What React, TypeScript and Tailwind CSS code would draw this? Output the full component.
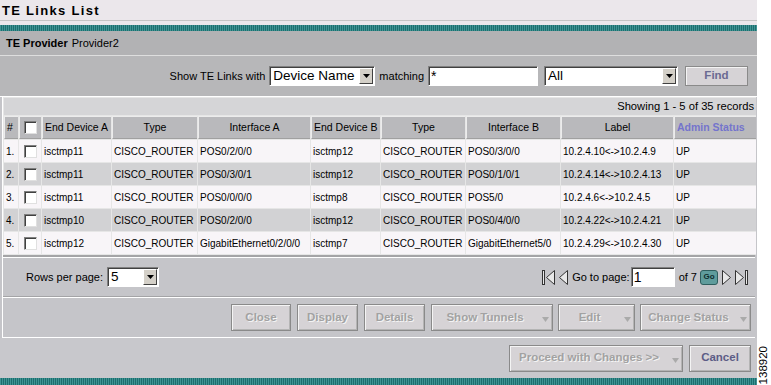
import React from "react";

const rows: string[][] = [
  ["1.", "isctmp11", "CISCO_ROUTER", "POS0/2/0/0", "isctmp12", "CISCO_ROUTER", "POS0/3/0/0", "10.2.4.10<->10.2.4.9", "UP"],
  ["2.", "isctmp11", "CISCO_ROUTER", "POS0/3/0/1", "isctmp12", "CISCO_ROUTER", "POS0/1/0/1", "10.2.4.14<->10.2.4.13", "UP"],
  ["3.", "isctmp11", "CISCO_ROUTER", "POS0/0/0/0", "isctmp8", "CISCO_ROUTER", "POS5/0", "10.2.4.6<->10.2.4.5", "UP"],
  ["4.", "isctmp10", "CISCO_ROUTER", "POS0/2/0/0", "isctmp12", "CISCO_ROUTER", "POS0/4/0/0", "10.2.4.22<->10.2.4.21", "UP"],
  ["5.", "isctmp12", "CISCO_ROUTER", "GigabitEthernet0/2/0/0", "isctmp7", "CISCO_ROUTER", "GigabitEthernet5/0", "10.2.4.29<->10.2.4.30", "UP"],
];

function Checkbox() {
  return (
    <div className="w-[13px] h-[13px] bg-white border-t border-l border-t-[#808080] border-l-[#808080] border-b border-r border-b-[#e0e0e0] border-r-[#e0e0e0] shadow-[inset_1px_1px_0_#404040]" />
  );
}

function Arrow() {
  return (
    <div className="w-[14px] h-[16px] shrink-0 bg-[#d4d0c8] border-t border-l border-t-white border-l-white border-b border-r border-b-[#404040] border-r-[#404040] flex items-center justify-center">
      <svg width="7" height="4" viewBox="0 0 7 4">
        <path d="M0 0 L7 0 L3.5 4 Z" fill="#000" />
      </svg>
    </div>
  );
}

function Select({ value, w }: { value: string; w: string }) {
  return (
    <div className={`${w} h-[20px] bg-white flex items-center justify-between border-t border-l border-t-[#808080] border-l-[#808080] border-b border-r border-b-white border-r-white shadow-[inset_1px_1px_0_#404040] pl-[3px] pr-[1px]`}>
      <span className="text-[13.5px] leading-none text-black whitespace-nowrap">{value}</span>
      <Arrow />
    </div>
  );
}

function Btn({ label, w, dd, enabled, cls }: { label: string; w: string; dd?: boolean; enabled?: boolean; cls?: string }) {
  return (
    <div className={`${w} ${cls ?? ""} h-[27px] bg-[#d6d3d6] border border-[#8a8a8a] shadow-[inset_1px_1px_0_#f4f4f4,inset_-1px_-1px_0_#b4b4b4] flex items-center`}>
      <span
        className={`flex-1 text-center font-bold text-[11.5px] whitespace-nowrap ${enabled ? "text-[#5c5c86]" : "text-[#a2a2a2] [text-shadow:1px_1px_0_#f4f4f4]"}`}
      >
        {label}
      </span>
      {dd && (
        <div className="w-[14px] flex items-center justify-center pt-[4px]">
          <svg width="7" height="5" viewBox="0 0 7 5">
            <path d="M0 0 L7 0 L3.5 5 Z" fill="#aaaaaa" />
          </svg>
        </div>
      )}
    </div>
  );
}

function NavFirst() {
  return (
    <svg width="15" height="17" viewBox="0 0 15 17">
      <rect x="1.5" y="1.5" width="2" height="14" fill="#e8e8e8" stroke="#333" />
      <path d="M13.5 1.5 L5.5 8.5 L13.5 15.5 Z" fill="#e8e8e8" stroke="#333" />
    </svg>
  );
}
function NavPrev() {
  return (
    <svg width="11" height="17" viewBox="0 0 11 17">
      <path d="M9.5 1.5 L1.5 8.5 L9.5 15.5 Z" fill="#e8e8e8" stroke="#333" />
    </svg>
  );
}
function NavNext() {
  return (
    <svg width="11" height="17" viewBox="0 0 11 17">
      <path d="M1.5 1.5 L9.5 8.5 L1.5 15.5 Z" fill="#e8e8e8" stroke="#333" />
    </svg>
  );
}
function NavLast() {
  return (
    <svg width="15" height="17" viewBox="0 0 15 17">
      <path d="M1.5 1.5 L9.5 8.5 L1.5 15.5 Z" fill="#e8e8e8" stroke="#333" />
      <rect x="11.5" y="1.5" width="2" height="14" fill="#e8e8e8" stroke="#333" />
    </svg>
  );
}

export default function App() {
  const td = "h-[22px] px-[2px] flex items-center text-[10px] text-black whitespace-nowrap overflow-hidden";
  const th = "h-[23px] px-[2px] flex items-center text-[10.5px] text-black whitespace-nowrap overflow-hidden bg-[#b9b9bc] border-l border-t border-l-[#ececec] border-t-[#ececec] border-b border-b-[#a0a0a0]";
  return (
    <div className="w-[771px] h-[385px] bg-white flex font-['Liberation_Sans',Arial,sans-serif] overflow-hidden">
      <div className="w-[757px] h-[385px] flex flex-col">
        {/* Title */}
        <div className="h-[21px] shrink-0 bg-[#ebe7eb] flex items-center pl-[2px] border-b border-[#c4c4c4]">
          <span className="text-[13px] font-bold tracking-[1.3px] text-black leading-none">TE Links List</span>
        </div>
        <div className="h-[4px] shrink-0 bg-[#ebe7eb]" />
        <div className="h-[6px] shrink-0 bg-[repeating-linear-gradient(90deg,#3f9494_0px,#3f9494_1px,#1d6e6e_1px,#1d6e6e_2px)]" />
        {/* Provider */}
        <div className="h-[25px] shrink-0 bg-[#b2b2b4] flex items-center pl-[6px] border-b border-[#dedede]">
          <span className="text-[11px] font-bold text-black">TE Provider</span>
          <span className="text-[11px] text-black ml-[4px]">Provider2</span>
        </div>
        {/* Filter */}
        <div className="h-[41px] shrink-0 bg-[#b7b7b9] flex items-center justify-end pr-[9px] border-b border-white">
          <span className="text-[11px] text-black mr-[4px]">Show TE Links with</span>
          <Select value="Device Name" w="w-[106px]" />
          <span className="text-[11px] text-black mx-[4px]">matching</span>
          <div className="w-[110px] h-[20px] bg-white border-t border-l border-t-[#808080] border-l-[#808080] border-b border-r border-b-white border-r-white shadow-[inset_1px_1px_0_#404040] pl-[2px] text-[14px] leading-[18px] text-black">
            *
          </div>
          <div className="w-[6px]" />
          <Select value="All" w="w-[134px]" />
          <div className="w-[7px]" />
          <div className="w-[63px] h-[20px] bg-[#d6d3d6] border border-[#8a8a8a] shadow-[inset_1px_1px_0_#f4f4f4] flex items-center justify-center">
            <span className="text-[11.5px] font-bold text-[#6a6a92]">Find</span>
          </div>
        </div>
        {/* Panel */}
        <div className="h-[241px] shrink-0 bg-[#c5c5c9] pl-[2px] pr-[2px]">
          <div className="h-full border-l border-white flex flex-col">
            <div className="grid grid-cols-[14px_22px_69px_85px_112px_69px_84px_94px_112px_82px] gap-px p-px bg-[#e6e6e6] w-[753px]">
              <div className="col-span-10 h-[17px] bg-[#d5d5d7] flex items-center justify-end text-[11.2px] text-black pr-[2px]">
                Showing 1 - 5 of 35 records
              </div>
              <div className={`${th} px-[1px]`}>#</div>
              <div className={`${th} justify-center`}><Checkbox /></div>
              <div className={th}>End Device A</div>
              <div className={`${th} justify-center`}>Type</div>
              <div className={`${th} justify-center`}>Interface A</div>
              <div className={th}>End Device B</div>
              <div className={`${th} justify-center`}>Type</div>
              <div className={`${th} justify-center`}>Interface B</div>
              <div className={`${th} justify-center`}>Label</div>
              <div className={th}>
                <span className="font-bold text-[#7474cc]">Admin Status</span>
              </div>
              {rows.map((r, i) => {
                const bg = i % 2 === 0 ? "bg-[#f8f5f8]" : "bg-[#d2d2d4]";
                return (
                  <React.Fragment key={i}>
                    <div className={`${td} ${bg} px-[1px] text-[10.5px]`}>{r[0]}</div>
                    <div className={`${td} ${bg} justify-center`}><Checkbox /></div>
                    {r.slice(1).map((c, j) => (
                      <div key={j} className={`${td} ${bg}`}>{c}</div>
                    ))}
                  </React.Fragment>
                );
              })}
            </div>
            <div className="h-[2px] shrink-0 bg-[#a4a4a6]" />
            <div className="h-[1px] shrink-0 bg-white" />
            {/* Rows per page */}
            <div className="h-[38px] shrink-0 flex items-center justify-between pl-[23px] pr-[6px]">
              <div className="flex items-center">
                <span className="text-[11px] text-black mr-[4px]">Rows per page:</span>
                <Select value="5" w="w-[52px]" />
              </div>
              <div className="flex items-center">
                <NavFirst />
                <div className="w-[2px]" />
                <NavPrev />
                <span className="text-[11px] text-black ml-[3px] mr-[1px]">Go to page:</span>
                <div className="w-[44px] h-[20px] bg-white border-t border-l border-t-[#808080] border-l-[#808080] border-b border-r border-b-white border-r-white shadow-[inset_1px_1px_0_#404040] pl-[2px] text-[14px] leading-[18px] text-black">
                  1
                </div>
                <span className="text-[11px] text-black ml-[4px] mr-[3px]">of 7</span>
                <div className="w-[18px] h-[15px] rounded-[3px] bg-[#5f9c9c] border border-[#2f5e5e] flex items-center justify-center">
                  <span className="text-[8px] font-bold text-[#0f2e2e] leading-none">Go</span>
                </div>
                <div className="w-[3px]" />
                <NavNext />
                <div className="w-[2px]" />
                <NavLast />
              </div>
            </div>
            <div className="h-[1px] shrink-0 bg-[#a4a4a6]" />
            <div className="h-[1px] shrink-0 bg-white" />
            {/* Buttons */}
            <div className="flex-1 flex items-center justify-end pr-[4px] border-b border-white">
              <Btn label="Close" w="w-[60px]" />
              <Btn label="Display" w="w-[61px]" cls="ml-[6px]" />
              <Btn label="Details" w="w-[61px]" cls="ml-[6px]" />
              <Btn label="Show Tunnels" w="w-[122px]" dd cls="ml-[6px]" />
              <Btn label="Edit" w="w-[77px]" dd cls="ml-[5px]" />
              <Btn label="Change Status" w="w-[111px]" dd cls="ml-[5px]" />
            </div>
          </div>
        </div>
        {/* Bottom */}
        <div className="flex-1 bg-[#c8c8cc] flex items-center justify-end pr-[6px] gap-[6px]">
          <Btn label="Proceed with Changes >>" w="w-[174px]" dd />
          <Btn label="Cancel" w="w-[62px]" enabled />
        </div>
        <div className="h-[7px] shrink-0 bg-[repeating-linear-gradient(90deg,#3f9494_0px,#3f9494_1px,#1d6e6e_1px,#1d6e6e_2px)]" />
      </div>
      <div className="w-[14px] h-[385px] bg-white flex items-end justify-center pb-[1px]">
        <span className="[writing-mode:vertical-rl] rotate-180 text-[11.5px] text-black leading-none">138920</span>
      </div>
    </div>
  );
}
